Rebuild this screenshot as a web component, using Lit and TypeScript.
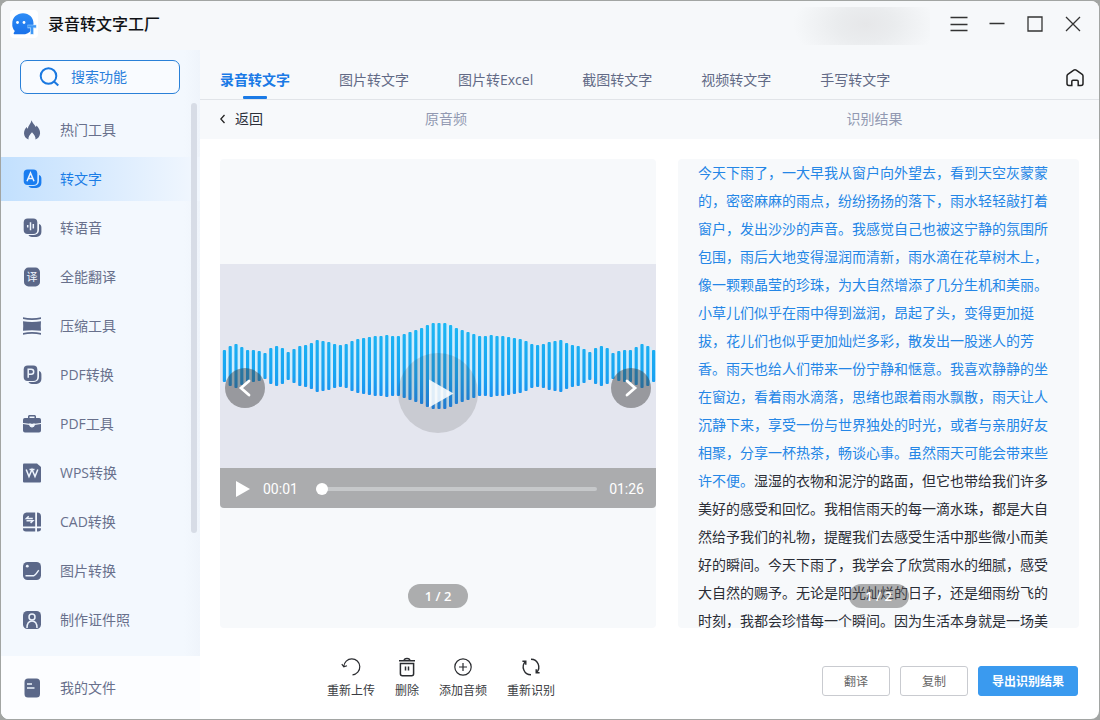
import { LitElement, html, svg, css, TemplateResult, SVGTemplateResult } from "lit";
import { customElement, property, state } from "lit/decorators.js";
import { classMap } from "lit/directives/class-map.js";

const crescent = svg`<path d="M17 6c1.7.6 2.4 1.8 2.4 3.4V14a5 5 0 0 1-5 5H10c-1.6 0-2.9-.7-3.6-2H12a5 5 0 0 0 5-5z"/>`;
const card = svg`<rect x="1.7" y=".6" width="13.6" height="15.4" rx="4"/>`;

const icons: Record<string, SVGTemplateResult> = {
  hot: svg`<path d="M9.6.3c.5 2.6 3.1 4.2 4.1 6.800.4-.4.6-1 .7-1.700 2 1.900 3.900 4.600 3.700 7.800-.2 3-2 5.300-4.600 6.300.3-2.200-.9-4.600-3.500-7.300-2.600 2.700-3.900 5.100-3.500 7.300C3.900 18.500 2 16.200 2 13.200c0-2.400 1.200-4.600 2.700-6.200.2.8.5 1.300 1 1.700C6.200 5.400 9 3.800 9.600.3z"/>`,
  text: svg`${crescent}${card}<path class="line" d="M5 12.300 8.500 4l3.500 8.300M6.200 9.600h4.600"/>`,
  voice: svg`${crescent}${card}<path class="line" d="M5.700 7v2.600M8.500 4.300v8M11.300 6v4.600"/>`,
  translate: svg`<rect x="2" y=".6" width="16" height="18.800" rx="4.500"/><text class="glyph" x="10" y="14" text-anchor="middle">译</text>`,
  compress: svg`<path d="M1 1.200c5.500 1.300 12.500 1.300 18 0v1.700c-5.500 1.500-12.500 1.500-18 0zM1 18.800c5.500-1.300 12.500-1.300 18 0v-1.700c-5.500-1.500-12.500-1.500-18 0zM1 5.200c5.500.9 12.500.9 18 0-.3 3.200-.3 6.400 0 9.600-5.500-.9-12.500-.9-18 0 .3-3.200.3-6.400 0-9.600z"/>`,
  pdf: svg`${crescent}${card}<path class="line" d="M6.200 12.800V4.300h3a2.500 2.500 0 0 1 0 5h-3"/>`,
  toolbox: svg`<path fill-rule="evenodd" d="M6 4V2.600C6 1.700 6.700 1 7.600 1h4.800c.9 0 1.600.7 1.600 1.600V4h3.200A1.800 1.800 0 0 1 19 5.800V9l-6.500.8h-5L1 9V5.800A1.800 1.800 0 0 1 2.800 4zm1.500 0h5V2.500h-5zM1 10l6.600.9c.3 1.400 1.200 2.300 2.400 2.300s2.100-.9 2.400-2.300L19 10v6.500a2 2 0 0 1-2 2H3a2 2 0 0 1-2-2z"/><path class="line" d="M8 9.500v1a2 2 0 0 0 4 0v-1"/>`,
  wps: svg`<path d="M1 1.500Q1 .5 2 .5h13l4 3.500v14.500q0 1-1 1H2q-1 0-1-1z"/><path class="line" d="M4.200 6.500l2.800 7 3-7 3 7 2.800-7M7.500 6.500h5"/>`,
  cad: svg`<path d="M4.500.5h8.700v14H1v-10a4 4 0 0 1 3.500-4zM15 .5a4 4 0 0 1 4 4v10h-4zM1 16.300h12.200v3.200H4a3 3 0 0 1-3-3.200zM15 16.300h4a3 3 0 0 1-3 3.200h-1z"/><path class="line" d="M10.800 6.400H4.500L6.700 4.300M4.500 8.800h6.300L8.600 11"/>`,
  image: svg`<rect x="1" y="1" width="18" height="18" rx="4.500"/><circle class="dot" cx="5.300" cy="5.200" r="1.400"/><path class="line" d="M3.500 14.800h8.300c1.800-.3 3.300-3.800 5-5.500"/>`,
  photo: svg`<rect x="1" y="1" width="18" height="18" rx="4.500"/><circle class="line" cx="10" cy="7" r="3"/><path class="line" d="M5 18c0-5 2-7 5-7s5 2 5 7"/>`,
  files: svg`<path d="M6 .5h8.500a3.500 3.500 0 0 1 3.500 3.500v12a3.500 3.500 0 0 1-3.500 3.500H6A3.500 3.500 0 0 1 2.500 16V4A3.500 3.500 0 0 1 6 .5z"/><path class="line" d="M5 6h5M5 10h7.500"/>`,
  reupload: svg`<path d="M2.800 9.500A8 8 0 1 1 11.500 17.800M.8 7.200l2 2.600 3.200-1"/>`,
  remove: svg`<path stroke-width="1.500" d="M2 3.800h16M7.200 3.400a2.800 2 0 0 1 5.600 0M3.400 6.500v10.200a2 2 0 0 0 2 2h9.200a2 2 0 0 0 2-2V6.500zM8.500 9.500v4M11.500 9.500v4"/>`,
  add: svg`<circle cx="10" cy="10" r="8.200"/><path d="M10 6v8M6 10h8"/>`,
  redo: svg`<path stroke-width="1.400" d="M10 2.200a7.800 7.800 0 0 1 5.500 13.300M10 17.800A7.800 7.800 0 0 1 4.500 4.500M15.200 12.200v3.500h3.400M4.800 7.800V4.300H1.400"/>`,
};

@customElement("side-item")
class SideItem extends LitElement {
  @property() icon = "";
  @property() label = "";
  @property({ type: Boolean }) active = false;

  static styles = css`
    :host { display: block; }
    .item {
      display: flex; align-items: center; gap: 18px; width: 100%; height: 44px;
      padding: 0 0 0 21px; border: 0; background: none; color: #68708c;
      font: inherit; text-align: left; cursor: pointer;
    }
    .active { color: #1a7de6; background: linear-gradient(90deg, #c2e0fe, #d9ebfe 50%, #f2f7fe); }
    .icon { width: 20px; height: 20px; flex: none; fill: #5b6889; }
    .active .icon { fill: #1a7df0; }
    .line { fill: none; stroke: #edf4fd; stroke-width: 1.500; }
    .dot { fill: #edf4fd; }
    .glyph { fill: #edf4fd; font-size: 11px; }
  `;

  render() {
    return html`<button class=${classMap({ item: true, active: this.active })}>
      <svg class="icon" viewBox="0 0 20 20">${icons[this.icon]}</svg>
      <span>${this.label}</span>
    </button>`;
  }
}

@customElement("audio-player")
class AudioPlayer extends LitElement {
  @state() private position = 0;

  static styles = css`
    :host { display: block; position: relative; width: 100%; }
    * { box-sizing: border-box; }
    button { border: 0; padding: 0; cursor: pointer; display: flex; align-items: center; justify-content: center; }
    .screen { display: flex; align-items: center; height: 204px; background: #e4e6ef; }
    .wave { width: 100%; display: block; }
    .bar { fill: url(#wave-fill); }
    .halo { fill: #cdeeff; }
    .round { position: absolute; bottom: 100px; width: 40px; height: 40px; border-radius: 50%; background: rgb(60 60 60 / 45%); }
    .prev { left: 5px; }
    .next { right: 5px; }
    .chevron { width: 20px; height: 20px; fill: none; stroke: #fff; stroke-width: 2.800; stroke-linecap: round; }
    .big {
      position: absolute; left: calc(50% - 40px); bottom: 75px; width: 80px; height: 80px;
      border-radius: 50%; background: rgb(60 60 60 / 16%);
    }
    .big svg { width: 32px; height: 32px; fill: rgb(255 255 255 / 86%); }
    .controls {
      display: flex; align-items: center; height: 40px; padding: 2px 12px 0 15px; gap: 12px;
      background: #abacae; border-radius: 0 0 4px 4px; color: #fff; font: 14px/20px Roboto, sans-serif;
    }
    .play { background: none; width: 16px; height: 20px; }
    .play svg { width: 16px; height: 18px; fill: #fff; }
    .seek { flex: 1; min-width: 0; margin: 0 0 0 6px; height: 12px; appearance: none; background: none; }
    .seek::-webkit-slider-runnable-track { height: 4px; border-radius: 2px; background: #c6c8ca; }
    .seek::-webkit-slider-thumb { appearance: none; width: 12px; height: 12px; margin-top: -4px; border-radius: 50%; background: #fff; }
  `;

  // Half heights of the bars from the outer edge to the middle one.
  private static half = [16, 20, 22, 19, 16, 16, 15, 13, 18, 20, 18, 14, 17, 20, 21, 23, 26, 25, 24, 22, 21, 22, 25, 27, 28, 29, 30, 30, 31, 30, 30, 32, 34, 36, 38, 41, 43, 43];

  private bars(): SVGTemplateResult[] {
    const half = AudioPlayer.half;
    const all = [...half, ...half.slice(0, -1).reverse()];
    return all.map((h, i) => {
      const x = 4.4 + i * 5.8;
      return svg`<rect class="halo" x=${x + 1.5} y=${46 - h} width="2.200" height=${2 * h - 3} />
        <rect class="bar" x=${x - 1.6} y=${45 - h} width="3.200" height=${h * 2} rx="1" />`;
    });
  }

  render() {
    return html`
      <div class="screen">
        <svg class="wave" viewBox="0 0 436 90" role="img" aria-label="音频波形">
          <defs>
            <linearGradient id="wave-fill" gradientUnits="userSpaceOnUse" x1="0" y1="0" x2="0" y2="90">
              <stop offset="0" stop-color="#1cb8f4" /><stop offset=".6" stop-color="#18a4f2" /><stop offset="1" stop-color="#1c84ee" />
            </linearGradient>
          </defs>
          ${this.bars()}
        </svg>
      </div>
      <button class="big" aria-label="播放音频"><svg viewBox="0 0 32 32"><path d="M7 2.500l24.500 14L7 30.500z" /></svg></button>
      <button class="round prev" aria-label="上一个"><svg class="chevron" viewBox="0 0 20 20"><path d="M14 3L6 10l8 7" /></svg></button>
      <button class="round next" aria-label="下一个"><svg class="chevron" viewBox="0 0 20 20"><path d="M6 3l8 7-8 7" /></svg></button>
      <div class="controls">
        <button class="play" aria-label="播放"><svg viewBox="0 0 16 18"><path d="M1 1l14 8-14 8z" /></svg></button>
        <span>00:01</span>
        <input class="seek" type="range" min="0" max="86" aria-label="播放进度" .value=${String(this.position)} />
        <span>01:26</span>
      </div>
    `;
  }
}

const menu: [string, string][] = [
  ["hot", "热门工具"], ["text", "转文字"], ["voice", "转语音"], ["translate", "全能翻译"],
  ["compress", "压缩工具"], ["pdf", "PDF转换"], ["toolbox", "PDF工具"], ["wps", "WPS转换"],
  ["cad", "CAD转换"], ["image", "图片转换"], ["photo", "制作证件照"],
];
const tabs = ["录音转文字", "图片转文字", "图片转Excel", "截图转文字", "视频转文字", "手写转文字"];
const tools: [string, string][] = [["reupload", "重新上传"], ["remove", "删除"], ["add", "添加音频"], ["redo", "重新识别"]];

const spoken = "今天下雨了，一大早我从窗户向外望去，看到天空灰蒙蒙的，密密麻麻的雨点，纷纷扬扬的落下，雨水轻轻敲打着窗户，发出沙沙的声音。我感觉自己也被这宁静的氛围所包围，雨后大地变得湿润而清新，雨水滴在花草树木上，像一颗颗晶莹的珍珠，为大自然增添了几分生机和美丽。小草儿们似乎在雨中得到滋润，昂起了头，变得更加挺拔，花儿们也似乎更加灿烂多彩，散发出一股迷人的芳香。雨天也给人们带来一份宁静和惬意。我喜欢静静的坐在窗边，看着雨水滴落，思绪也跟着雨水飘散，雨天让人沉静下来，享受一份与世界独处的时光，或者与亲朋好友相聚，分享一杯热茶，畅谈心事。虽然雨天可能会带来些许不便。";
const rest = "湿湿的衣物和泥泞的路面，但它也带给我们许多美好的感受和回忆。我相信雨天的每一滴水珠，都是大自然给予我们的礼物，提醒我们去感受生活中那些微小而美好的瞬间。今天下雨了，我学会了欣赏雨水的细腻，感受大自然的赐予。无论是阳光灿烂的日子，还是细雨纷飞的时刻，我都会珍惜每一个瞬间。因为生活本身就是一场美";

@customElement("app-root")
class AppRoot extends LitElement {
  static styles = css`
    :host {
      display: block; box-sizing: border-box; height: 100vh; padding: 1px; background: #a2a5a3;
      font: 14px/20px "Open Sans", "Noto Sans CJK SC", sans-serif; color: #626a86;
    }
    * { box-sizing: border-box; }
    button { font: inherit; color: inherit; cursor: pointer; }
    .window { display: flex; flex-direction: column; height: 100%; border-radius: 8px; overflow: hidden; background: #fff; }
    .titlebar { display: flex; align-items: center; flex: none; height: 49px; padding: 0 7px 4px 9px; background: #f6f8fa; }
    .logo { width: 28px; height: 28px; margin-right: 10px; }
    .name { margin: 0; flex: 1; font-size: 16px; line-height: 24px; font-weight: 500; color: #101216; }
    .account { width: 144px; height: 38px; margin: 4px 10px 0 0; background: radial-gradient(ellipse 72px 44px at 55% 45%, #e6e7e9, #eaecee 40%, #f1f3f5 75%, #f6f8fa); }
    .control { width: 38px; height: 40px; padding: 0; border: 0; background: none; }
    .control svg { display: block; width: 20px; height: 20px; margin: 0 auto; fill: none; stroke: #333; stroke-width: 1.300; }
    .body { display: flex; flex: 1; min-height: 0; }
    .sidebar { position: relative; display: flex; flex-direction: column; flex: none; width: 199px; background: linear-gradient(90deg, #f3f8fe 92%, #eff4fb); }
    .search { display: flex; align-items: center; flex: none; gap: 10px; height: 34px; margin: 10px 20px 14px 19px; padding: 0 10px 0 18px; border: 1px solid #2a80d8; border-radius: 7px; background: #f9fbff; }
    .search svg { width: 22px; height: 22px; flex: none; fill: none; stroke: #1a78e0; stroke-width: 2; }
    .search input { flex: 1; min-width: 0; padding: 0; border: 0; outline: 0; background: none; font: inherit; color: #1a78e0; }
    .search input::placeholder { color: #2a7fdc; opacity: 1; }
    .menu { display: flex; flex-direction: column; flex: 1; gap: 5px; min-height: 0; overflow: hidden; }
    .scrollbar { position: absolute; right: 3px; top: 53px; width: 6px; height: 430px; border-radius: 3px; background: #d7dce6; }
    .mine { flex: none; padding: 10px 0 9px; background: #fcfdff; }
    .main { display: flex; flex: 1; flex-direction: column; min-width: 0; }
    .tabs { display: flex; align-items: stretch; flex: none; height: 50px; padding: 0 14px 0 20px; gap: 49px; background: #f7f9fb; border-bottom: 1px solid #e1e4e8; }
    .tab { position: relative; padding: 10px 0 0; border: 0; background: none; white-space: nowrap; }
    .current { color: #1a7ae6; font-weight: 700; }
    .current::after { content: ""; position: absolute; left: calc(50% - 12px); bottom: 0; width: 24px; height: 3px; border-radius: 1px; background: #1a7ae6; }
    .home { margin: 6px 0 0 auto; padding: 0; border: 0; background: none; }
    .home svg { display: block; width: 20px; height: 20px; fill: none; stroke: #222; stroke-width: 1.500; }
    .columns { display: grid; grid-template-columns: 436fr 401fr; column-gap: 22px; padding: 0 20px; }
    .heads { flex: none; height: 39px; padding-bottom: 2px; align-items: center; background: #f7f9fb; color: #9299b2; text-align: center; }
    .source { display: flex; align-items: center; }
    .source span { flex: 1; padding-right: 27px; }
    .result { padding-right: 8px; }
    .back { display: flex; align-items: center; gap: 10px; padding: 0; border: 0; background: none; color: #2c303a; }
    .back svg { width: 5px; height: 10px; fill: none; stroke: #222; stroke-width: 1.300; }
    .panels { flex: 1; min-height: 0; padding-top: 20px; grid-template-rows: minmax(0, 1fr); }
    .panel { position: relative; background: #f7f9fb; border-radius: 4px; overflow: hidden; }
    .media { display: flex; align-items: center; padding-bottom: 15px; }
    .page { position: absolute; left: calc(50% - 30px); bottom: 20px; width: 60px; height: 24px; border-radius: 12px; background: rgb(80 80 80 / 45%); color: #fff; font-size: 13px; line-height: 24px; font-weight: 600; text-align: center; }
    .transcript { margin: 0; padding: 0 20px; line-height: 28px; color: #2a2d36; text-spacing-trim: space-all; }
    .spoken { color: #2486e6; }
    .footer { flex: none; height: 91px; align-items: center; }
    .tools { display: flex; justify-content: center; gap: 20px; padding: 9px 0 0 6px; }
    .tool { display: flex; flex-direction: column; align-items: center; gap: 5px; padding: 0; border: 0; background: none; color: #3a3c42; font-size: 12px; line-height: 18px; }
    .tool svg { width: 20px; height: 20px; fill: none; stroke: #2a2c30; stroke-width: 1.200; }
    .actions { display: flex; justify-content: flex-end; gap: 10px; padding: 14px 1px 0 0; }
    .action { width: 68px; height: 30px; padding: 2px 0 0; border: 1px solid #c9cbd0; border-radius: 3px; background: #fff; color: #666; font-size: 12px; }
    .primary { width: 100px; border-color: #3a9aef; background: #3a9aef; color: #fff; font-weight: 700; }
  `;

  private control(label: string, shape: SVGTemplateResult): TemplateResult {
    return html`<button class="control" aria-label=${label}><svg viewBox="0 0 20 20">${shape}</svg></button>`;
  }

  render() {
    return html`
      <div class="window">
        <header class="titlebar">
          <svg class="logo" viewBox="0 0 28 28" aria-hidden="true">
            <defs><linearGradient id="logo-fill" x1="0" y1="0" x2="0" y2="1"><stop offset="0" stop-color="#2f8df6" /><stop offset="1" stop-color="#1a72ea" /></linearGradient></defs>
            <rect width="28" height="28" rx="4" fill="#fff" />
            <path d="M13 3.200c6 0 10.500 4.200 10.500 10.200 0 6.300-4.500 10.900-10.500 10.900H4.800c-1.300 0-1.400-1-.8-1.800l.8-1.500A10 10 0 0 1 2.300 13.400C2.300 7.400 7 3.200 13 3.200z" fill="url(#logo-fill)" />
            <circle cx="7.500" cy="12.500" r="1.400" fill="#fff" /><circle cx="14" cy="12.500" r="1.400" fill="#fff" />
            <path d="M17.500 16.500h9M22 16.500v8" fill="none" stroke="#b9dcfd" stroke-width="3.600" />
            <path d="M17.500 16.300H26M22 16.300v7.700" fill="none" stroke="#3f98f5" stroke-width="2.200" />
          </svg>
          <h1 class="name">录音转文字工厂</h1>
          <div class="account"></div>
          ${this.control("菜单", svg`<path d="M1.500 3.500h17M1.500 10.500h17M1.500 16.500h17" />`)}
          ${this.control("最小化", svg`<path d="M2.500 9.500h15" />`)}
          ${this.control("最大化", svg`<path d="M3 3h14v14H3z" />`)}
          ${this.control("关闭", svg`<path d="M3 3l14 14M17 3L3 17" />`)}
        </header>
        <div class="body">
          <aside class="sidebar">
            <label class="search">
              <svg viewBox="0 0 22 22" aria-hidden="true"><circle cx="9.500" cy="10" r="7.800" /><path d="M15 15.500l4.300 4" /></svg>
              <input type="text" placeholder="搜索功能" aria-label="搜索功能" />
            </label>
            <nav class="menu">
              ${menu.map(([icon, label]) => html`<side-item icon=${icon} label=${label} ?active=${icon === "text"}></side-item>`)}
            </nav>
            <div class="scrollbar"></div>
            <div class="mine"><side-item icon="files" label="我的文件"></side-item></div>
          </aside>
          <main class="main">
            <nav class="tabs">
              ${tabs.map((t, i) => html`<button class=${classMap({ tab: true, current: i === 0 })}>${t}</button>`)}
              <button class="home" aria-label="首页"><svg viewBox="0 0 20 20"><path d="M2 8q0-1 .8-1.600L8.800 2.200q1.200-.8 2.400 0l6 4.200q.8.600.8 1.600v7.500a2 2 0 0 1-2 2h-2.800v-4q0-1.300-1.200-1.300H8q-1.200 0-1.200 1.300v4H4a2 2 0 0 1-2-2z" /></svg></button>
            </nav>
            <div class="columns heads">
              <div class="source">
                <button class="back"><svg viewBox="0 0 5 10"><path d="M4.500 1L.8 5l3.700 4" /></svg>返回</button>
                <span>原音频</span>
              </div>
              <div class="result">识别结果</div>
            </div>
            <div class="columns panels">
              <section class="panel media">
                <audio-player></audio-player>
                <div class="page">1 / 2</div>
              </section>
              <section class="panel">
                <p class="transcript"><span class="spoken">${spoken}</span>${rest}</p>
                <div class="page">1 / 2</div>
              </section>
            </div>
            <footer class="columns footer">
              <div class="tools">
                ${tools.map(([icon, label]) => html`<button class="tool"><svg viewBox="0 0 20 20">${icons[icon]}</svg>${label}</button>`)}
              </div>
              <div class="actions">
                <button class="action">翻译</button>
                <button class="action">复制</button>
                <button class="action primary">导出识别结果</button>
              </div>
            </footer>
          </main>
        </div>
      </div>
    `;
  }
}
